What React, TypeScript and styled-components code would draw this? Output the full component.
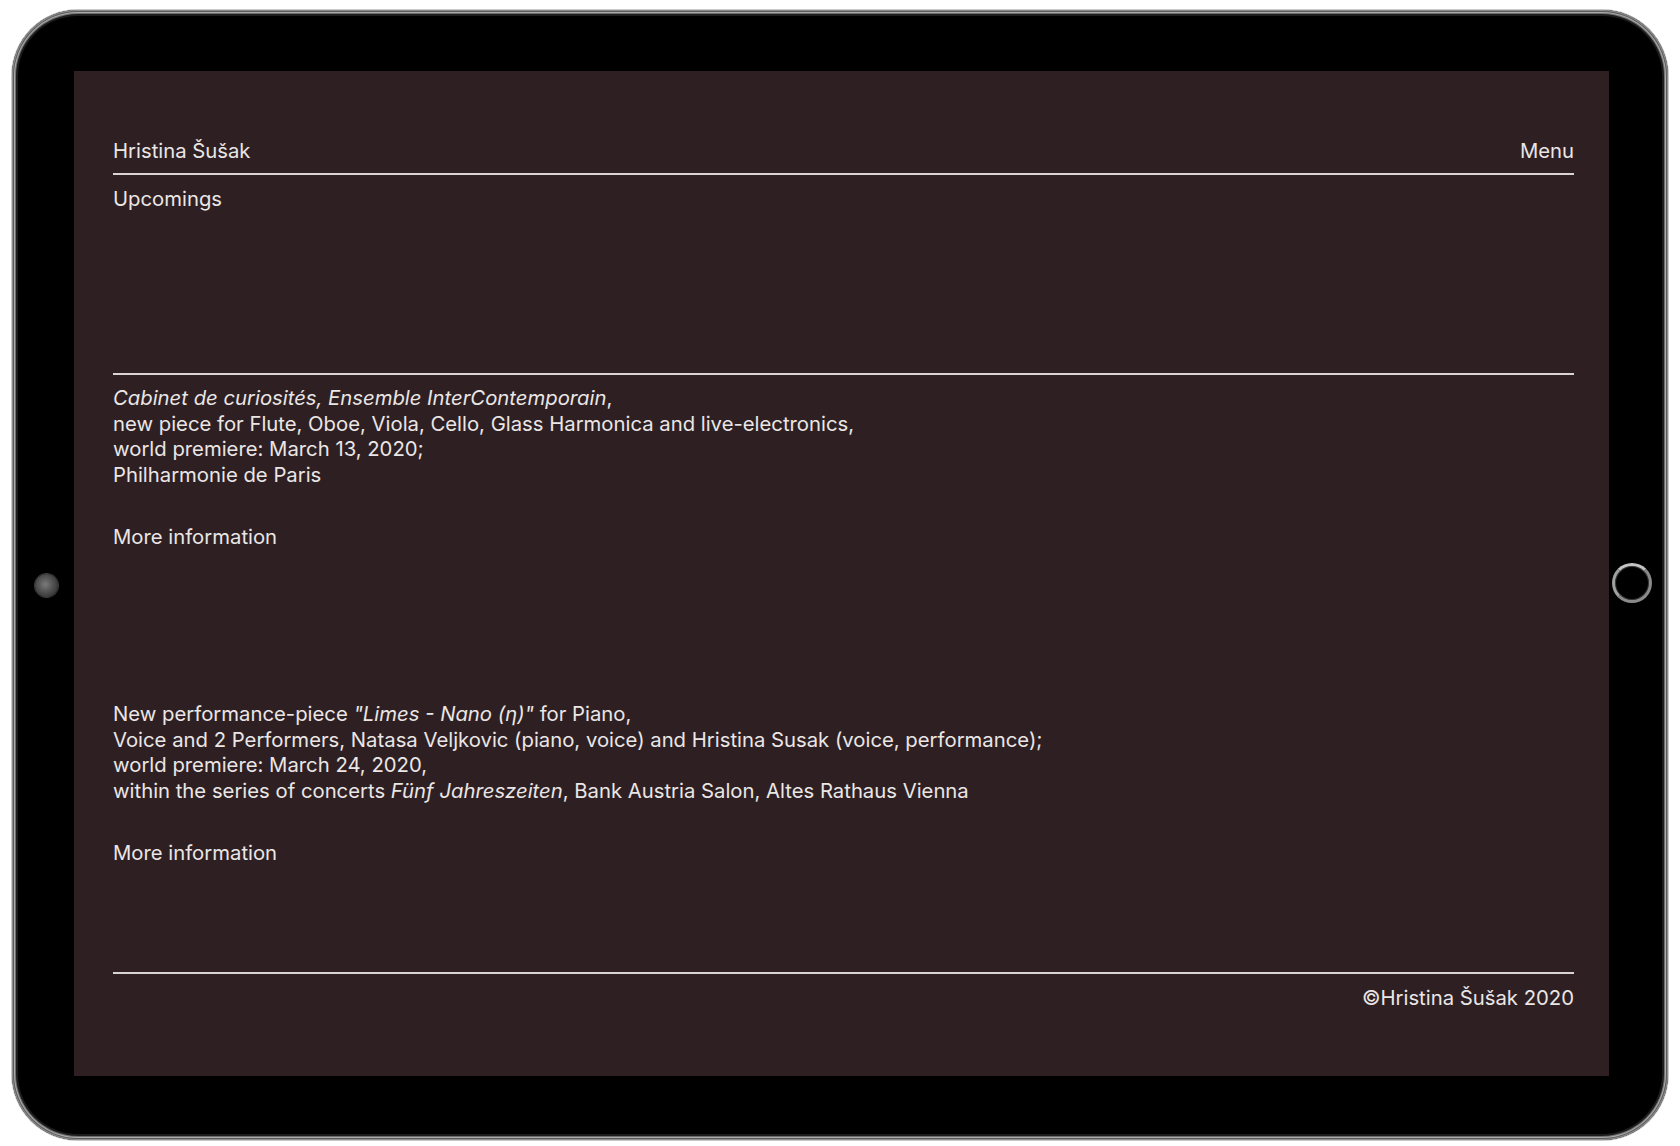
import React from "react";
import styled, { createGlobalStyle } from "styled-components";

const Global = createGlobalStyle`
  html, body { margin: 0; padding: 0; background: #ffffff; }
  * { box-sizing: border-box; }
`;

const Stage = styled.div`
  width: 1680px;
  height: 1146px;
  padding: 10px 0 0 12px;
  background: #ffffff;
`;

const Device = styled.div`
  width: 1656px;
  height: 1130px;
  border-radius: 66px;
  background: #000;
  display: grid;
  grid-template-columns: 62px 1535px 59px;
  grid-template-rows: 61px 1005px 64px;
  box-shadow:
    inset 0 0 0 1px #8c8c8c,
    inset 0 0 0 2px #5b5b5b,
    inset 0 0 0 3px #a9a9a9,
    inset 0 0 0 4px #6e6e6e,
    inset 0 0 0 6px #1c1c1c,
    0 0 0 1px #c9c9c9;
`;

const SideLeft = styled.div`
  grid-column: 1;
  grid-row: 2;
  display: flex;
  align-items: center;
  justify-content: flex-end;
  padding-right: 16px;
  padding-top: 23px;
`;

const SideRight = styled.div`
  grid-column: 3;
  grid-row: 2;
  display: flex;
  align-items: center;
  justify-content: flex-start;
  padding-left: 3px;
  padding-top: 19px;
`;

const Camera = styled.div`
  width: 23px;
  height: 23px;
  border-radius: 50%;
  background: radial-gradient(circle at 45% 45%, #7a7a7a 0%, #505050 45%, #2e2e2e 85%, #222 100%);
  box-shadow: 0 0 0 1px #3a3a3a;
`;

const HomeButton = styled.div`
  width: 40px;
  height: 40px;
  border-radius: 50%;
  border: 3px solid #8a8a8a;
  border-top-color: #c4c4c4;
  border-left-color: #a0a0a0;
  background: #000;
  box-shadow: inset 0 0 0 1px #333;
`;

const Screen = styled.main`
  grid-column: 2;
  grid-row: 2;
  background: #2e2022;
  color: #ebe6e6;
  font-family: Inter, "Open Sans", "Liberation Sans", sans-serif;
  font-size: 20.3px;
  line-height: 25.6px;
  padding: 67px 35px 0 39px;
  display: flex;
  flex-direction: column;
  -webkit-font-smoothing: antialiased;
`;

const Header = styled.header`
  display: flex;
  justify-content: space-between;
  align-items: baseline;
  padding-bottom: 9px;
  border-bottom: 2px solid #d9d3d3;
`;

const Brand = styled.span``;
const MenuLink = styled.span``;

const Upcomings = styled.section`
  padding-top: 11px;
  padding-bottom: 162px;
  border-bottom: 2px solid #d9d3d3;
`;

const Events = styled.div`
  display: flex;
  flex-direction: column;
  padding-top: 10px;
`;

const Event = styled.article<{ $gapAfter: number }>`
  margin-bottom: ${(p) => p.$gapAfter}px;
`;

const Text = styled.p`
  margin: 0;
`;

const More = styled.p`
  margin: 36px 0 0;
`;

const Footer = styled.footer`
  border-top: 2px solid #d9d3d3;
  padding-top: 11px;
  text-align: right;
`;

export default function App() {
  return (
    <>
      <Global />
      <Stage>
        <Device>
          <SideLeft>
            <Camera />
          </SideLeft>
          <Screen>
            <Header>
              <Brand>Hristina Šušak</Brand>
              <MenuLink>Menu</MenuLink>
            </Header>
            <Upcomings>Upcomings</Upcomings>
            <Events>
              <Event $gapAfter={152}>
                <Text>
                  <i>Cabinet de curiosités, Ensemble InterContemporain</i>,
                  <br />
                  new piece for Flute, Oboe, Viola, Cello, Glass Harmonica and live-electronics,
                  <br />
                  world premiere: March 13, 2020;
                  <br />
                  Philharmonie de Paris
                </Text>
                <More>More information</More>
              </Event>
              <Event $gapAfter={107}>
                <Text>
                  New performance-piece <i>"Limes - Nano (η)"</i> for Piano,
                  <br />
                  Voice and 2 Performers, Natasa Veljkovic (piano, voice) and Hristina Susak (voice, performance);
                  <br />
                  world premiere: March 24, 2020,
                  <br />
                  within the series of concerts <i>Fünf Jahreszeiten</i>, Bank Austria Salon, Altes Rathaus Vienna
                </Text>
                <More>More information</More>
              </Event>
            </Events>
            <Footer>©Hristina Šušak 2020</Footer>
          </Screen>
          <SideRight>
            <HomeButton />
          </SideRight>
        </Device>
      </Stage>
    </>
  );
}
